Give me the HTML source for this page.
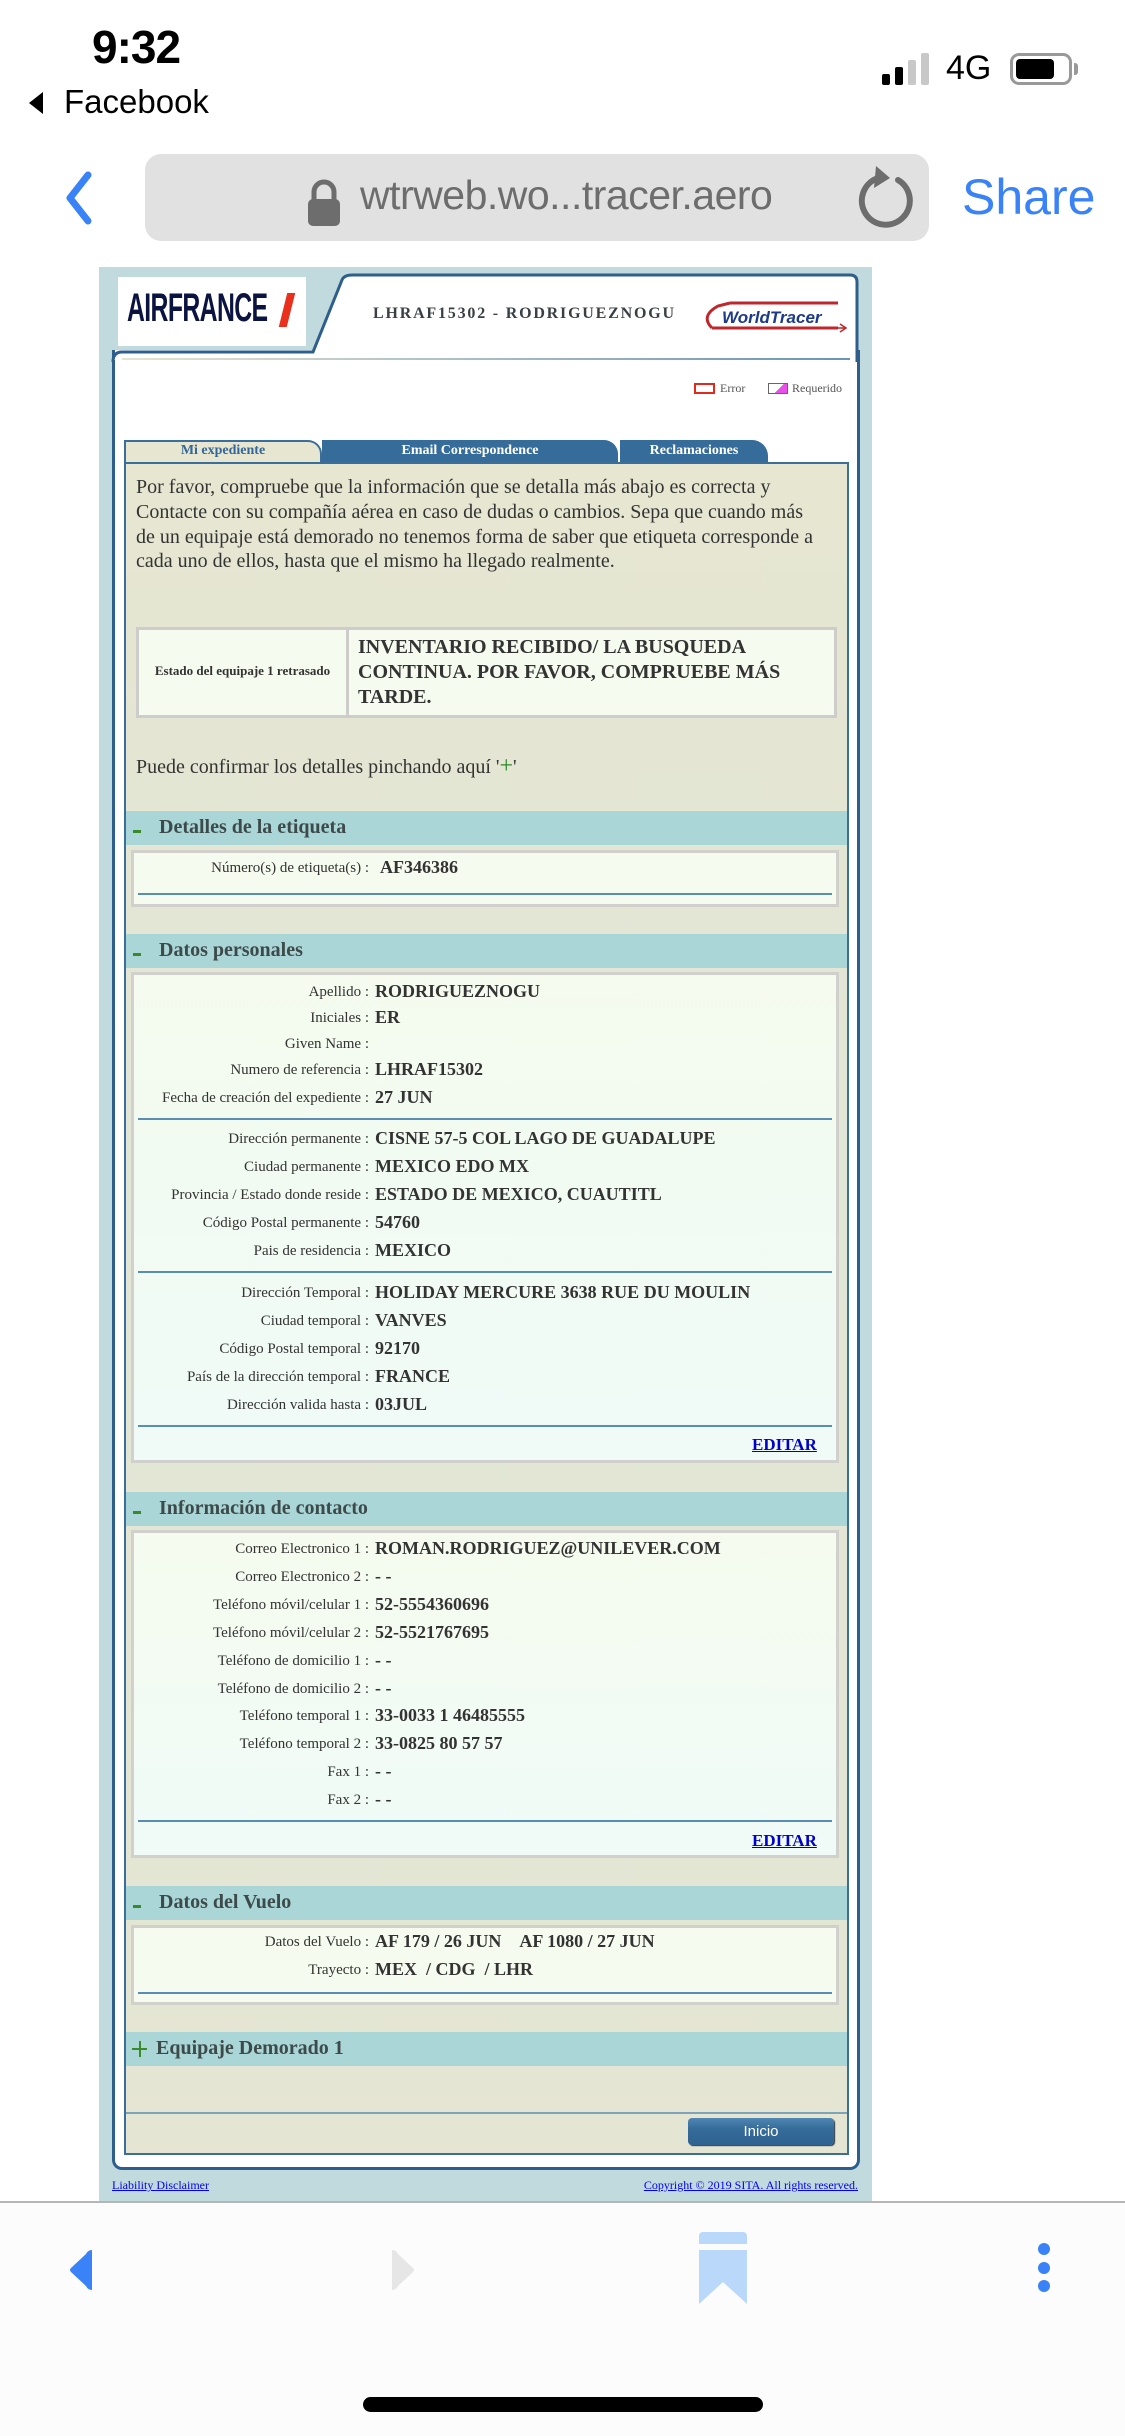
<!DOCTYPE html>
<html><head><meta charset="utf-8">
<style>
*{margin:0;padding:0;box-sizing:border-box}
body{width:1125px;height:2436px;position:relative;background:#fff;overflow:hidden;font-family:"Liberation Serif",serif;color:#333}
.a{position:absolute}
.sans{font-family:"Liberation Sans",sans-serif}
.lbl{position:absolute;left:130px;width:239px;text-align:right;font-size:15px;color:#333;white-space:nowrap}
.val{position:absolute;left:375px;font-size:18px;font-weight:bold;color:#333;white-space:nowrap}
.band{position:absolute;left:126px;width:721px;height:34px;background:#abd6d7}
.band .t{position:absolute;left:33px;top:5px;font-size:20px;font-weight:bold;color:#3d4a4a}
.band .m{position:absolute;left:7px;top:19px;width:8px;height:3px;background:#3a8a2a}
.box{position:absolute;left:131px;width:708px;border:3px solid #d2d0cc;background:#f5fbee}
.hl{position:absolute;left:138px;width:694px;height:2px;background:#5a8db5}
.edit{position:absolute;left:752px;font-size:17px;font-weight:bold;color:#0000cc;text-decoration:underline}
</style></head><body>

<!-- status bar -->
<div class="a sans" style="left:92px;top:20px;font-size:46px;font-weight:bold;color:#000;letter-spacing:-1px">9:32</div>
<div class="a" style="left:29px;top:92px;width:0;height:0;border-top:11px solid transparent;border-bottom:11px solid transparent;border-right:14px solid #000"></div>
<div class="a sans" style="left:64px;top:83px;font-size:33px;color:#000">Facebook</div>
<div class="a" style="left:882px;top:74px;width:8px;height:11px;background:#000;border-radius:2px"></div>
<div class="a" style="left:895px;top:67px;width:8px;height:18px;background:#000;border-radius:2px"></div>
<div class="a" style="left:908px;top:60px;width:8px;height:25px;background:#c8c8c8;border-radius:2px"></div>
<div class="a" style="left:921px;top:53px;width:8px;height:32px;background:#c8c8c8;border-radius:2px"></div>
<div class="a sans" style="left:946px;top:49px;font-size:34px;color:#000">4G</div>
<div class="a" style="left:1010px;top:53px;width:62px;height:32px;border:3px solid #999;border-radius:9px"></div>
<div class="a" style="left:1016px;top:59px;width:38px;height:20px;background:#000;border-radius:4px"></div>
<div class="a" style="left:1074px;top:63px;width:4px;height:12px;background:#999;border-radius:0 3px 3px 0"></div>

<!-- url bar -->
<svg class="a" style="left:60px;top:170px" width="40" height="56"><path d="M28 5 L10 28 L28 51" stroke="#3a82f7" stroke-width="7" fill="none" stroke-linecap="round" stroke-linejoin="round"/></svg>
<div class="a" style="left:145px;top:154px;width:784px;height:87px;background:#e1e1e1;border-radius:16px"></div>
<svg class="a" style="left:306px;top:178px" width="36" height="50"><path d="M8 22 V14 A10 10 0 0 1 28 14 V22" stroke="#6d6d6d" stroke-width="5" fill="none"/><rect x="2" y="21" width="32" height="27" rx="5" fill="#6d6d6d"/></svg>
<div class="a sans" style="left:360px;top:172px;font-size:41px;color:#6d6d6d;letter-spacing:-0.5px">wtrweb.wo...tracer.aero</div>
<svg class="a" style="left:856px;top:164px" width="62" height="66"><path d="M22 14 A24 24 0 1 0 42 16" stroke="#6d6d6d" stroke-width="6" fill="none" stroke-linecap="round"/><path d="M20 2 L34 14 L18 24 Z" fill="#6d6d6d"/></svg>
<div class="a sans" style="left:962px;top:168px;font-size:50px;color:#3a82f7">Share</div>

<!-- page panel -->
<div class="a" style="left:99px;top:267px;width:773px;height:1934px;background:#c1dadd"></div>
<!-- outer white panel -->
<div class="a" style="left:112px;top:350px;width:748px;height:1820px;background:#fff;border:3px solid #2d5e8c;border-top:none;border-radius:0 0 10px 10px"></div>
<svg class="a" style="left:110px;top:272px" width="760" height="90">
<path d="M3 88 V88 Q3 80 12 80 L203 80 L232 8 Q234 3 242 3 L740 3 Q747 3 747 10 L747 90 Z" fill="#fff"/>
<path d="M3 90 Q3 80 12 80 L203 80 L232 8 Q234 3 242 3 L740 3 Q747 3 747 10 L747 90" stroke="#2d5e8c" stroke-width="3" fill="none"/>
</svg>
<div class="a" style="left:118px;top:277px;width:188px;height:69px;background:#fff"></div>
<div class="a sans" style="left:127px;top:288px;font-size:40px;line-height:40px;font-weight:bold;color:#0b1340;transform:scaleX(0.62);transform-origin:left;letter-spacing:-1px">AIRFRANCE</div>
<div class="a" style="left:283px;top:293px;width:8px;height:34px;background:#e8301c;transform:skewX(-14deg)"></div>
<div class="a" style="left:373px;top:305px;font-size:16px;font-weight:bold;color:#3a3f44;letter-spacing:1.8px">LHRAF15302 - RODRIGUEZNOGU</div>
<svg class="a" style="left:700px;top:298px" width="150" height="40">
<path d="M30 5 H138 M12 30 Q0 18 18 8 L30 5 M12 30 L138 30" stroke="#c0272d" stroke-width="3" fill="none"/>
<text x="22" y="25" font-family="Liberation Sans" font-weight="bold" font-style="italic" font-size="17" fill="#1d3a8a">WorldTracer</text>
<path d="M128 30 L146 30 M140 26 L146 30 L140 34" stroke="#c0272d" stroke-width="1.5" fill="none"/>
</svg>
<div class="a" style="left:122px;top:358px;width:728px;height:2px;background:linear-gradient(90deg,#e4e4d0,#6d93b3)"></div>
<div class="a" style="left:694px;top:383px;width:21px;height:11px;border:2px solid #e12a1c"></div>
<div class="a" style="left:720px;top:381px;font-size:12px;color:#555">Error</div>
<div class="a" style="left:768px;top:383px;width:20px;height:11px;border:1px solid #666;background:linear-gradient(135deg,#fff 55%,#e94fe9 55%)"></div>
<div class="a" style="left:792px;top:381px;font-size:12px;color:#555">Requerido</div>

<!-- tabs -->
<div class="a" style="left:124px;top:440px;width:198px;height:24px;background:#e7e7d1;border:2px solid #3a6e9c;border-bottom:none;border-radius:0 14px 0 0"></div>
<div class="a" style="left:124px;top:443px;width:198px;text-align:center;font-size:14px;font-weight:bold;color:#336699">Mi expediente</div>
<div class="a" style="left:322px;top:440px;width:296px;height:23px;background:#356c99;border-radius:0 14px 0 0"></div>
<div class="a" style="left:322px;top:443px;width:296px;text-align:center;font-size:14px;font-weight:bold;color:#fff">Email Correspondence</div>
<div class="a" style="left:620px;top:440px;width:148px;height:23px;background:#356c99;border-radius:0 16px 0 0"></div>
<div class="a" style="left:620px;top:443px;width:148px;text-align:center;font-size:14px;font-weight:bold;color:#fff">Reclamaciones</div>

<!-- inner content panel -->
<div class="a" style="left:124px;top:462px;width:725px;height:1693px;background:linear-gradient(180deg,#e6e6d1 0%,#e2e6d6 40%,#e4e6d3 100%);border:2px solid #3a6e9c"></div>

<div class="a" style="left:136px;top:475px;width:682px;font-size:20px;line-height:24.8px;color:#333">Por favor, compruebe que la información que se detalla más abajo es correcta y Contacte con su compañía aérea en caso de dudas o cambios. Sepa que cuando más de un equipaje está demorado no tenemos forma de saber que etiqueta corresponde a cada uno de ellos, hasta que el mismo ha llegado realmente.</div>

<div class="a" style="left:136px;top:627px;width:701px;height:91px;border:3px solid #cfcdcb;background:#f5fbee"></div>
<div class="a" style="left:346px;top:629px;width:3px;height:87px;background:#cfcdcb"></div>
<div class="a" style="left:139px;top:663px;width:207px;text-align:center;font-size:13px;font-weight:bold;color:#333;white-space:nowrap">Estado del equipaje 1 retrasado</div>
<div class="a" style="left:358px;top:635px;width:470px;font-size:20px;line-height:25px;font-weight:bold;color:#333">INVENTARIO RECIBIDO/ LA BUSQUEDA CONTINUA. POR FAVOR, COMPRUEBE MÁS TARDE.</div>

<div class="a" style="left:136px;top:753px;font-size:20px;color:#333">Puede confirmar los detalles pinchando aquí '<span style="color:#2a8a2a;font-size:24px">+</span>'</div>

<!-- Detalles de la etiqueta -->
<div class="band" style="top:811px"><div class="m"></div><div class="t">Detalles de la etiqueta</div></div>
<div class="box" style="top:850px;height:57px"></div>
<div class="lbl" style="top:860px">Número(s) de etiqueta(s) :</div>
<div class="val" style="left:380px;top:857px">AF346386</div>
<div class="hl" style="top:893px"></div>

<!-- Datos personales -->
<div class="band" style="top:934px"><div class="m"></div><div class="t">Datos personales</div></div>
<div class="box" style="top:972px;height:491px;background:linear-gradient(180deg,#f5fbee 0%,#f2fbf2 40%,#f0fbf8 100%)"></div>
<div class="lbl" style="top:984px">Apellido :</div><div class="val" style="top:981px">RODRIGUEZNOGU</div>
<div class="lbl" style="top:1010px">Iniciales :</div><div class="val" style="top:1007px">ER</div>
<div class="lbl" style="top:1036px">Given Name :</div>
<div class="lbl" style="top:1062px">Numero de referencia :</div><div class="val" style="top:1059px">LHRAF15302</div>
<div class="lbl" style="top:1090px">Fecha de creación del expediente :</div><div class="val" style="top:1087px">27 JUN</div>
<div class="hl" style="top:1118px"></div>
<div class="lbl" style="top:1131px">Dirección permanente :</div><div class="val" style="top:1128px">CISNE 57-5 COL LAGO DE GUADALUPE</div>
<div class="lbl" style="top:1159px">Ciudad permanente :</div><div class="val" style="top:1156px">MEXICO EDO MX</div>
<div class="lbl" style="top:1187px">Provincia / Estado donde reside :</div><div class="val" style="top:1184px">ESTADO DE MEXICO, CUAUTITL</div>
<div class="lbl" style="top:1215px">Código Postal permanente :</div><div class="val" style="top:1212px">54760</div>
<div class="lbl" style="top:1243px">Pais de residencia :</div><div class="val" style="top:1240px">MEXICO</div>
<div class="hl" style="top:1271px"></div>
<div class="lbl" style="top:1285px">Dirección Temporal :</div><div class="val" style="top:1282px">HOLIDAY MERCURE 3638 RUE DU MOULIN</div>
<div class="lbl" style="top:1313px">Ciudad temporal :</div><div class="val" style="top:1310px">VANVES</div>
<div class="lbl" style="top:1341px">Código Postal temporal :</div><div class="val" style="top:1338px">92170</div>
<div class="lbl" style="top:1369px">País de la dirección temporal :</div><div class="val" style="top:1366px">FRANCE</div>
<div class="lbl" style="top:1397px">Dirección valida hasta :</div><div class="val" style="top:1394px">03JUL</div>
<div class="hl" style="top:1425px"></div>
<div class="edit" style="top:1435px">EDITAR</div>

<!-- Información de contacto -->
<div class="band" style="top:1492px"><div class="m"></div><div class="t">Información de contacto</div></div>
<div class="box" style="top:1530px;height:328px;background:linear-gradient(180deg,#f5fbee 0%,#f0fbf8 100%)"></div>
<div class="lbl" style="top:1541px">Correo Electronico 1 :</div><div class="val" style="top:1538px">ROMAN.RODRIGUEZ@UNILEVER.COM</div>
<div class="lbl" style="top:1569px">Correo Electronico 2 :</div><div class="val" style="top:1566px">- -</div>
<div class="lbl" style="top:1597px">Teléfono móvil/celular 1 :</div><div class="val" style="top:1594px">52-5554360696</div>
<div class="lbl" style="top:1625px">Teléfono móvil/celular 2 :</div><div class="val" style="top:1622px">52-5521767695</div>
<div class="lbl" style="top:1653px">Teléfono de domicilio 1 :</div><div class="val" style="top:1650px">- -</div>
<div class="lbl" style="top:1681px">Teléfono de domicilio 2 :</div><div class="val" style="top:1678px">- -</div>
<div class="lbl" style="top:1708px">Teléfono temporal 1 :</div><div class="val" style="top:1705px">33-0033 1 46485555</div>
<div class="lbl" style="top:1736px">Teléfono temporal 2 :</div><div class="val" style="top:1733px">33-0825 80 57 57</div>
<div class="lbl" style="top:1764px">Fax 1 :</div><div class="val" style="top:1761px">- -</div>
<div class="lbl" style="top:1792px">Fax 2 :</div><div class="val" style="top:1789px">- -</div>
<div class="hl" style="top:1820px"></div>
<div class="edit" style="top:1831px">EDITAR</div>

<!-- Datos del Vuelo -->
<div class="band" style="top:1886px"><div class="m"></div><div class="t">Datos del Vuelo</div></div>
<div class="box" style="top:1925px;height:80px"></div>
<div class="lbl" style="top:1934px">Datos del Vuelo :</div><div class="val" style="top:1931px">AF 179 / 26 JUN &nbsp;&nbsp;&nbsp;AF 1080 / 27 JUN</div>
<div class="lbl" style="top:1962px">Trayecto :</div><div class="val" style="top:1959px">MEX &nbsp;/ CDG &nbsp;/ LHR</div>
<div class="hl" style="top:1992px"></div>

<!-- Equipaje -->
<div class="band" style="top:2032px"><div class="t" style="left:30px;font-size:20px">Equipaje Demorado 1</div>
<div class="a" style="left:6px;top:16px;width:15px;height:2px;background:#3a8a2a"></div><div class="a" style="left:12.5px;top:9px;width:2px;height:16px;background:#3a8a2a"></div></div>

<div class="a" style="left:126px;top:2112px;width:721px;height:2px;background:#7ea4bb"></div>
<div class="a sans" style="left:688px;top:2118px;width:146px;height:27px;background:linear-gradient(180deg,#4f86b3,#356c99 40%,#2f6290);border-radius:4px;color:#fff;font-size:15px;text-align:center;line-height:27px;box-shadow:1px 1px 1px #234">Inicio</div>

<div class="a" style="left:112px;top:2178px;font-size:12px;color:#00f;text-decoration:underline">Liability Disclaimer</div>
<div class="a" style="left:600px;top:2178px;width:258px;text-align:right;font-size:12px;color:#00f;text-decoration:underline;white-space:nowrap">Copyright © 2019 SITA. All rights reserved.</div>

<!-- bottom toolbar -->
<div class="a" style="left:0;top:2201px;width:1125px;height:235px;background:#fcfcfc;border-top:2px solid #b5b5b5"></div>
<svg class="a" style="left:66px;top:2248px" width="30" height="44"><path d="M26 2 Q22 2 20 6 L5 20 Q3 22 5 24 L20 38 Q22 42 26 42 Z" fill="#3a82f7"/></svg>
<svg class="a" style="left:388px;top:2248px" width="30" height="44"><path d="M4 2 Q8 2 10 6 L25 20 Q27 22 25 24 L10 38 Q8 42 4 42 Z" fill="#e6e6e6"/></svg>
<div class="a" style="left:699px;top:2232px;width:48px;height:12px;background:#bad8fa;border-radius:4px 4px 0 0"></div>
<svg class="a" style="left:699px;top:2250px" width="48" height="56"><path d="M0 0 H48 V54 L24 32 L0 54 Z" fill="#bad8fa"/></svg>
<div class="a" style="left:1038px;top:2243px;width:12px;height:12px;border-radius:50%;background:#3a82f7"></div>
<div class="a" style="left:1038px;top:2262px;width:12px;height:12px;border-radius:50%;background:#3a82f7"></div>
<div class="a" style="left:1038px;top:2280px;width:12px;height:12px;border-radius:50%;background:#3a82f7"></div>
<div class="a" style="left:363px;top:2397px;width:400px;height:15px;background:#000;border-radius:8px"></div>
</body></html>
